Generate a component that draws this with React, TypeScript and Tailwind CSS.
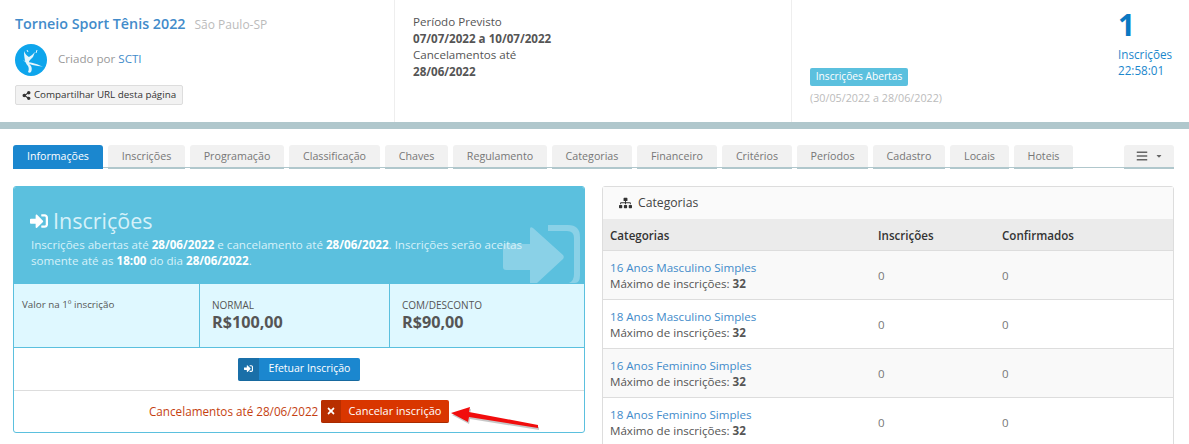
import { FaBars, FaCaretDown, FaShareAlt, FaSignInAlt, FaSitemap, FaTimes } from "react-icons/fa";

const tabs = [
  { label: "Inscrições", width: "w-[77px]" },
  { label: "Programação", width: "w-[94px]" },
  { label: "Classificação", width: "w-[91px]" },
  { label: "Chaves", width: "w-[63px]" },
  { label: "Regulamento", width: "w-[94px]" },
  { label: "Categorias", width: "w-[80px]" },
  { label: "Financeiro", width: "w-[80px]" },
  { label: "Critérios", width: "w-[70px]" },
  { label: "Períodos", width: "w-[71px]" },
  { label: "Cadastro", width: "w-[72px]" },
  { label: "Locais", width: "w-[59px]" },
  { label: "Hoteis", width: "w-[59px]" },
];

const categorias = [
  { nome: "16 Anos Masculino Simples", bg: "bg-[#f9f9f9]" },
  { nome: "18 Anos Masculino Simples", bg: "bg-white" },
  { nome: "16 Anos Feminino Simples", bg: "bg-[#f9f9f9]" },
  { nome: "18 Anos Feminino Simples", bg: "bg-white" },
];

function Logo() {
  return (
    <svg viewBox="0 0 32 32" className="h-[32px] w-[32px]">
      <circle cx="16" cy="16" r="16" fill="#0ea5ec" />
      <path d="M9 7c1 3 3 5 5 6l3-2 3-3-2 5-3 3c-2 2-1 4 1 6 1 2 1 4 0 6-1 1-2 1-3 0 1-2 1-4 0-6-3-3-4-9-4-15z" fill="#e6f6fd" />
      <path d="M8 16c5 3 12 2 20 7-7-2-14-1-20-7z" fill="#e6f6fd" />
      <path d="M22 6l-1 3M12 6l1 2" stroke="#e6f6fd" strokeWidth="1" />
    </svg>
  );
}

function Watermark() {
  return (
    <svg viewBox="500 222 84 61" className="absolute right-0 bottom-0 h-[61px] w-[84px]" fill="#8ad1e7">
      <path d="M530 229q0-3 3-1L563 255q1.500 2 0 4L537 283H530V270H506q-3 0-3-3V247q0-3 3-3H530z" />
      <path d="M548 225H568Q580 225 580 237V275Q580 283 575 283H569Q574 281 574 274V238Q574 231 567 231H548z" />
    </svg>
  );
}

function Arrow() {
  return (
    <svg viewBox="0 0 100 40" className="absolute left-[450px] top-[402px] h-[40px] w-[100px]">
      <path d="M1 11 20 5 19 10 88 23 88 26 19 15 18 20z" fill="#000" opacity="0.22" transform="translate(1 2)" />
      <path d="M1 11 20 5 19 10 88 23 88 26 19 15 18 20z" fill="#f10d0d" />
    </svg>
  );
}

export default function App() {
  return (
    <div className="relative h-[444px] w-[1189px] overflow-hidden bg-white font-['Open_Sans',sans-serif] text-[11.6px] text-[#555]">
      <header className="flex h-[122px]">
        <div className="w-[395px] border-r border-[#eee] pl-[15px] pt-[14px]">
          <div className="flex items-baseline gap-[9px]">
            <span className="text-[14.3px] font-semibold leading-[19px] text-[#428bca]">Torneio Sport Tênis 2022</span>
            <span className="text-[12px] text-[#bbb]">São Paulo-SP</span>
          </div>
          <div className="mt-[10px] flex items-center gap-[11px]">
            <Logo />
            <span className="pb-[2px] text-[#999]">
              Criado por <span className="text-[#428bca]">SCTI</span>
            </span>
          </div>
          <button className="mt-[9px] flex h-[20px] w-[168px] items-center justify-center gap-[3px] rounded-[2px] border border-[#ddd] bg-[#f2f2f2] text-[9.8px] text-[#333]">
            <FaShareAlt className="h-[9px] w-[9px]" />
            Compartilhar URL desta página
          </button>
        </div>
        <div className="w-[397px] border-r border-[#eee] pl-[18px] pt-[14px] leading-[16.5px] text-[#555]">
          <div>Período Previsto</div>
          <div className="font-bold">07/07/2022 a 10/07/2022</div>
          <div>Cancelamentos até</div>
          <div className="font-bold">28/06/2022</div>
        </div>
        <div className="flex w-[326px] flex-col pl-[18px] pt-[68px]">
          <span className="flex h-[18px] w-[98px] items-center justify-center rounded-[2px] bg-[#5bc0de] text-[10.2px] text-white">Inscrições Abertas</span>
          <span className="mt-[4px] text-[10.75px] leading-[16px] text-[#bbb]">(30/05/2022 a 28/06/2022)</span>
        </div>
        <div className="flex flex-col pt-[5px]">
          <span className="text-[30px] font-bold leading-[40px] text-[#0a78c2]">1</span>
          <span className="mt-[1px] text-[11.7px] leading-[16px] text-[#1b87cc]">Inscrições</span>
          <span className="text-[11.7px] leading-[17px] text-[#1b87cc]">22:58:01</span>
        </div>
      </header>
      <div className="h-[7px] bg-[#b0c7cc]" />
      <nav className="mx-[13px] mt-[16px] flex h-[23px] w-[1161px]">
        <div className="flex h-[24px] w-[90px] items-center justify-center rounded-t-[3px] bg-[#1b87cf] text-[10.6px] text-white">Informações</div>
        <div className="flex h-[23px] w-[1071px] items-start gap-[5px] border-b border-[#b0c7cc] pl-[5px]">
          {tabs.map((tab) => (
            <div key={tab.label} className={`flex h-[24px] ${tab.width} items-center justify-center rounded-t-[3px] border-b-2 border-[#b0c7cc] bg-[#f1f1f1] text-[10.7px] text-[#777]`}>
              {tab.label}
            </div>
          ))}
          <div className="ml-auto flex h-[24px] w-[50px] items-center justify-center gap-[7px] rounded-t-[3px] border-b-2 border-[#b0c7cc] bg-[#f1f1f1] text-[#666]">
            <FaBars className="h-[12px] w-[12px]" />
            <FaCaretDown className="h-[8px] w-[8px]" />
          </div>
        </div>
      </nav>
      <main className="mx-[13px] mt-[18px] flex w-[1161px] items-start gap-[17px]">
        <section className="w-[572px] overflow-hidden rounded-[3px] border border-[#5bc0de]">
          <div className="relative h-[96px] bg-[#5bc0de] pl-[16px] pt-[21px] text-[#d6f1f9]">
            <Watermark />
            <div className="relative flex items-center gap-[5px] text-[21.5px] leading-[26px]">
              <FaSignInAlt className="h-[18px] w-[18px] text-white" />
              Inscrições
            </div>
            <p className="relative ml-[1px] mt-[3px] w-[515px] leading-[16px]">
              Inscrições abertas até <b className="text-white">28/06/2022</b> e cancelamento até <b className="text-white">28/06/2022</b>. Inscrições serão aceitas somente até as <b className="text-white">18:00</b> do dia <b className="text-white">28/06/2022</b>.
            </p>
          </div>
          <div className="flex h-[65px] border-y border-[#5bc0de] bg-[#dff8ff]">
            <div className="w-[186px] border-r border-[#5bc0de] pl-[8px] pt-[14px] text-[9.8px] leading-[14px]">Valor na 1º inscrição</div>
            <div className="w-[190px] border-r border-[#5bc0de] pl-[12px] pt-[14px]">
              <div className="text-[10px] leading-[14px]">NORMAL</div>
              <div className="text-[16.2px] font-bold leading-[21px]">R$100,00</div>
            </div>
            <div className="pl-[12px] pt-[14px]">
              <div className="text-[10px] leading-[14px]">COM/DESCONTO</div>
              <div className="text-[16.2px] font-bold leading-[21px]">R$90,00</div>
            </div>
          </div>
          <div className="flex h-[43px] items-center justify-center border-b border-[#ddd]">
            <button className="flex h-[23px] w-[122px] overflow-hidden rounded-[2px] border-b border-[#17699f] bg-[#1b87cf] text-[10.5px] text-white">
              <span className="flex h-full w-[21px] items-center justify-center bg-[#1a6fa8]">
                <FaSignInAlt className="h-[9px] w-[9px]" />
              </span>
              <span className="flex h-full flex-1 items-center justify-center">Efetuar Inscrição</span>
            </button>
          </div>
          <div className="flex h-[41px] items-center pl-[135px]">
            <span className="w-[169px] whitespace-nowrap text-[11.7px] text-[#c53f11]">Cancelamentos até 28/06/2022</span>
            <button className="ml-[3px] flex h-[23px] w-[128px] overflow-hidden rounded-[2px] border-b border-[#a82a00] bg-[#d93600] text-[11px] text-white">
              <span className="flex h-full w-[20px] items-center justify-center bg-[#b82e00]">
                <FaTimes className="h-[10px] w-[10px]" />
              </span>
              <span className="flex h-full flex-1 items-center justify-center">Cancelar inscrição</span>
            </button>
          </div>
        </section>
        <section className="w-[572px] rounded-t-[3px] border border-[#ddd]">
          <div className="flex h-[32px] items-center gap-[6px] bg-[#fafafa] pl-[16px] text-[#444]">
            <FaSitemap className="h-[12px] w-[13px] text-[#333]" />
            <span className="text-[12.2px]">Categorias</span>
          </div>
          <div className="flex h-[32px] items-center border-b border-[#ddd] bg-[#ebebeb] pl-[7px] pt-[2px] text-[11.6px] font-semibold text-[#333]">
            <span className="w-[268px]">Categorias</span>
            <span className="w-[124px]">Inscrições</span>
            <span>Confirmados</span>
          </div>
          {categorias.map((c) => (
            <div key={c.nome} className={`flex h-[49px] items-center border-b border-[#ddd] pl-[7px] pt-[2px] ${c.bg}`}>
              <div className="w-[268px] leading-[16.5px]">
                <div className="text-[#428bca]">{c.nome}</div>
                <div>
                  Máximo de inscrições: <b>32</b>
                </div>
              </div>
              <span className="w-[124px] text-[11.5px] text-[#777]">0</span>
              <span className="text-[11.5px] text-[#777]">0</span>
            </div>
          ))}
        </section>
      </main>
      <Arrow />
    </div>
  );
}
